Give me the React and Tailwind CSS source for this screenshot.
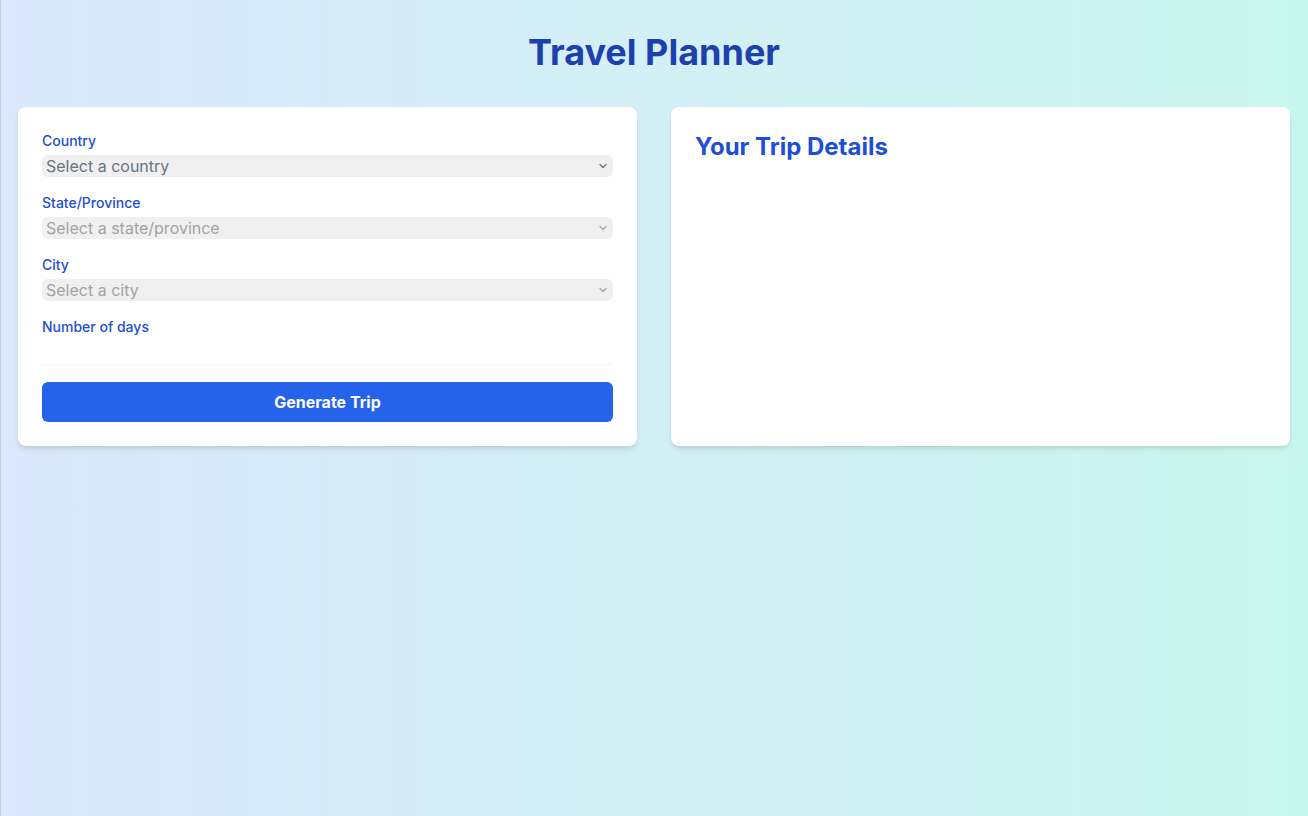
import { ChevronDown } from 'lucide-react';

const FIELDS = [
  { id: 'country', label: 'Country', placeholder: 'Select a country', disabled: false },
  { id: 'state', label: 'State/Province', placeholder: 'Select a state/province', disabled: true },
  { id: 'city', label: 'City', placeholder: 'Select a city', disabled: true },
];

function SelectField({ id, label, placeholder, disabled }) {
  return (
    <div>
      <label htmlFor={id} className="block text-sm font-medium text-[#1d4ed8] leading-5 mb-1">
        {label}
      </label>
      <div className="relative">
        <select
          id={id}
          disabled={disabled}
          defaultValue=""
          className={`block w-full h-[22px] appearance-none rounded-md bg-[#f0f0f0] pl-1 pr-6 text-base leading-[22px] outline-none ${disabled ? 'text-[#a3a3a3]' : 'text-[#6b7280]'}`}
        >
          <option value="">{placeholder}</option>
        </select>
        <ChevronDown
          className={`pointer-events-none absolute right-[4px] top-1/2 -translate-y-1/2 h-3 w-3 ${disabled ? 'text-[#a3a3a3]' : 'text-[#6b7280]'}`}
          strokeWidth={2.5}
        />
      </div>
    </div>
  );
}

export default function App() {
  return (
    <div
      className="min-h-[816px] bg-gradient-to-r from-[#dbe8fd] to-[#c9f7ee] pl-[17px] pr-[18px] pt-8 pb-8 border-l border-[#c7cdd4]"
      style={{ fontFamily: 'Inter, "Noto Sans", sans-serif' }}
    >
      <h1 className="text-center text-4xl leading-10 font-bold text-[#1e40af] mb-[35px]">
        Travel Planner
      </h1>

      <div className="grid grid-cols-2 gap-[34px]">
        <div className="bg-white rounded-lg shadow-md p-6">
          <form className="flex flex-col gap-4" onSubmit={(e) => e.preventDefault()}>
            {FIELDS.map((f) => (
              <SelectField key={f.id} {...f} />
            ))}
            <div>
              <label htmlFor="days" className="block text-sm font-medium text-[#1d4ed8] leading-5 mb-1">
                Number of days
              </label>
              <input
                id="days"
                type="number"
                className="block w-full h-[24px] border-b border-gray-100 text-base outline-none"
              />
            </div>
            <button
              type="submit"
              className="mt-px h-10 w-full rounded-md bg-[#2563eb] text-white font-bold text-base"
            >
              Generate Trip
            </button>
          </form>
        </div>

        <div className="bg-white rounded-lg shadow-md p-6">
          <h2 className="text-2xl leading-8 font-bold text-[#1d4ed8]">Your Trip Details</h2>
        </div>
      </div>
    </div>
  );
}
